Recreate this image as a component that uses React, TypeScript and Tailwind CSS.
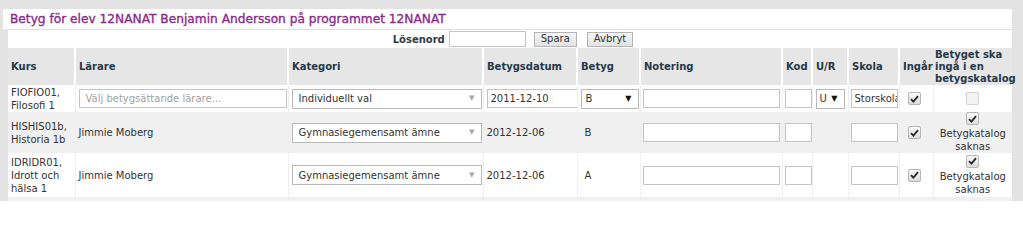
import React from 'react';

const FONT = { fontFamily: '"DejaVu Sans", Verdana, sans-serif' };

const Check = ({ checked = true, faded = false }: { checked?: boolean; faded?: boolean }) => (
  <span
    className={`inline-flex items-center justify-center w-[13px] h-[13px] rounded-[2px] border align-middle ${
      faded ? 'border-[#d4d4d4] bg-[#f3f3f3]' : 'border-[#b5b5b5] bg-gradient-to-b from-[#fbfbfb] to-[#dcdcdc]'
    }`}
  >
    {checked && (
      <svg width="9" height="8" viewBox="0 0 9 8">
        <path d="M1 4.2 L3.4 6.6 L8 1.2" fill="none" stroke="#2a2a2a" strokeWidth="1.8" />
      </svg>
    )}
  </span>
);

const SelectBox = ({ value, width, dark = false, pl = 'pl-[6px]' }: { value: string; width: string; dark?: boolean; pl?: string }) => (
  <div className={`${width} h-[20px] border border-[#b9b9b9] bg-white flex items-center justify-between ${pl} pr-[6px]`}>
    <span className="truncate">{value}</span>
    <span className={dark ? 'text-[8px] text-[#111]' : 'text-[7px] text-[#a8a8a8]'}>▼</span>
  </div>
);

const Box = ({ width, value = '', placeholder = '' }: { width: string; value?: string; placeholder?: string }) => (
  <div className={`${width} h-[19px] border border-[#c4c4c4] bg-white flex items-center pl-[3px] overflow-hidden whitespace-nowrap`}>
    {value ? <span>{value}</span> : <span className="text-[#a0a0a0] pl-[3px]">{placeholder}</span>}
  </div>
);

const rows = [
  { kurs: ['FIOFIO01,', 'Filosofi 1'], larare: null, kategori: 'Individuellt val', datum: '2011-12-10', betyg: 'B', edit: true, bg: 'bg-white' },
  { kurs: ['HISHIS01b,', 'Historia 1b'], larare: 'Jimmie Moberg', kategori: 'Gymnasiegemensamt ämne', datum: '2012-12-06', betyg: 'B', edit: false, bg: 'bg-[#f0f0f0]' },
  { kurs: ['IDRIDR01,', 'Idrott och', 'hälsa 1'], larare: 'Jimmie Moberg', kategori: 'Gymnasiegemensamt ämne', datum: '2012-12-06', betyg: 'A', edit: false, bg: 'bg-white' },
];

const headers = ['Kurs', 'Lärare', 'Kategori', 'Betygsdatum', 'Betyg', 'Notering', 'Kod', 'U/R', 'Skola'];

export default function App() {
  return (
    <div className="w-[1023px] h-[201px] overflow-hidden bg-[#e3e3e3] pt-[9px] text-[10px] text-[#333]" style={FONT}>
      <div className="ml-[3px] w-[1009px] bg-white h-[20px] pl-[7px] flex items-center">
        <h1 className="text-[12.2px] text-[#8b2a8b] font-normal [-webkit-text-stroke:0.35px_#8b2a8b]">
          Betyg för elev 12NANAT Benjamin Andersson på programmet 12NANAT
        </h1>
      </div>
      <div className="ml-[8px] w-[1004px] bg-white">
        <div className="h-[19px] border-t border-[#dedede] flex items-center justify-center">
          <span className="font-bold text-[#2d3b48] mr-[4px] ml-[6px]">Lösenord</span>
          <div className="w-[77px] h-[16px] border border-[#c4c4c4] bg-white" />
          <button className="ml-[8px] h-[15px] px-[6px] border border-[#b4b4b4] bg-gradient-to-b from-[#f6f6f6] to-[#e2e2e2] leading-none text-[#333]">Spara</button>
          <button className="ml-[10px] h-[15px] px-[6px] border border-[#b4b4b4] bg-gradient-to-b from-[#f6f6f6] to-[#e2e2e2] leading-none text-[#333]">Avbryt</button>
        </div>
        <table className="table-fixed border-collapse w-[1004px]">
          <colgroup>
            <col className="w-[67px]" />
            <col className="w-[213px]" />
            <col className="w-[195px]" />
            <col className="w-[94px]" />
            <col className="w-[63px]" />
            <col className="w-[142px]" />
            <col className="w-[30px]" />
            <col className="w-[36px]" />
            <col className="w-[51px]" />
            <col className="w-[34px]" />
            <col className="w-[79px]" />
          </colgroup>
          <thead>
            <tr className="bg-[#e6e6e6] h-[37px] text-[#25394a] font-bold leading-[12px]">
              {headers.map((h) => (
                <th key={h} className="text-left align-middle px-[3px] border-r-2 border-white whitespace-nowrap">{h}</th>
              ))}
              <th className="text-left align-middle pl-[3px] pr-0 whitespace-nowrap">Ingår</th>
              <th className="text-left align-middle pl-[2px] pr-0 leading-[12px]">
                Betyget ska<br />ingå i en<br />betygskatalog
              </th>
            </tr>
          </thead>
          <tbody className="leading-[13px]">
            {rows.map((r, i) => (
              <tr key={i} className={`${r.bg} ${i === 0 ? 'h-[27px]' : i === 1 ? 'h-[41px]' : 'h-[44px]'}`}>
                <td className="px-[3px] align-middle border-r border-[#efefef]">
                  {r.kurs.map((k) => <div key={k}>{k}</div>)}
                </td>
                <td className="px-[3px] align-middle border-r border-[#efefef]">
                  {r.larare ? r.larare : <Box width="w-[208px]" placeholder="Välj betygsättande lärare..." />}
                </td>
                <td className="px-[3px] align-middle border-r border-[#efefef]">
                  <SelectBox value={r.kategori} width="w-[190px]" />
                </td>
                <td className="px-[3px] align-middle border-r border-[#efefef]">
                  {r.edit ? <Box width="w-[91px]" value={r.datum} /> : r.datum}
                </td>
                <td className="px-[3px] align-middle border-r border-[#efefef]">
                  {r.edit ? <SelectBox value={r.betyg} width="w-[58px]" dark pl="pl-[4px]" /> : <span className="pl-[4px]">{r.betyg}</span>}
                </td>
                <td className="px-[2px] align-middle border-r border-[#efefef]">
                  <Box width="w-[137px]" />
                </td>
                <td className="px-[2px] align-middle border-r border-[#efefef]">
                  <Box width="w-[27px]" />
                </td>
                <td className="px-[3px] align-middle border-r border-[#efefef]">
                  {r.edit && <SelectBox value="U" width="w-[29px]" dark pl="pl-[3px]" />}
                </td>
                <td className="px-[2px] align-middle border-r border-[#efefef]">
                  {r.edit ? <Box width="w-[47px]" value="Storskola" /> : <Box width="w-[47px]" />}
                </td>
                <td className="pl-[8px] align-middle border-r border-[#efefef]">
                  <Check />
                </td>
                <td className="text-center align-middle leading-[13px]">
                  {r.edit ? (
                    <Check checked={false} faded />
                  ) : (
                    <div className="flex flex-col items-center">
                      <Check />
                      <span className="mt-[2px]">Betygkatalog</span>
                      <span>saknas</span>
                    </div>
                  )}
                </td>
              </tr>
            ))}
            <tr className="bg-[#f0f0f0] h-[20px]">
              <td colSpan={11} />
            </tr>
          </tbody>
        </table>
      </div>
    </div>
  );
}
